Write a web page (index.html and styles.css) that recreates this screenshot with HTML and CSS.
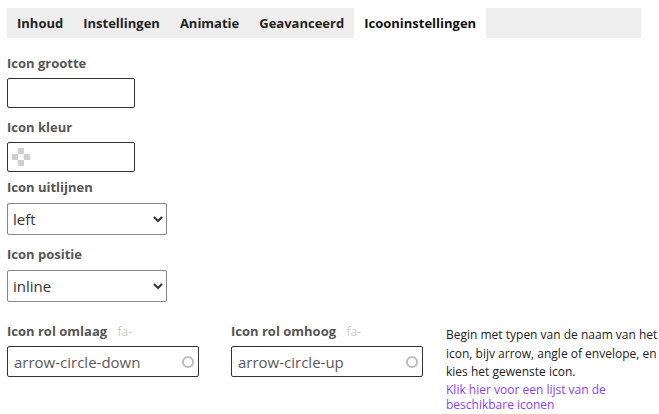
FILE: index.html
```html
<!DOCTYPE html>
<html lang="nl">
<head>
    <meta charset="UTF-8">
    <title>Icooninstellingen</title>
    <link rel="stylesheet" href="styles.css">
</head>
<body>
    <div class="tabs">
        <div class="tab">Inhoud</div>
        <div class="tab">Instellingen</div>
        <div class="tab">Animatie</div>
        <div class="tab">Geavanceerd</div>
        <div class="tab active">Icooninstellingen</div>
        <div class="tab-fill"></div>
    </div>

    <div class="panel">
        <div class="field">
            <label>Icon grootte</label>
            <input type="text" class="text-input">
        </div>
        <div class="field field-tight">
            <label>Icon kleur</label>
            <div class="color-input"><span class="checker"></span></div>
        </div>
        <div class="field">
            <label>Icon uitlijnen</label>
            <select class="select-input">
                <option>left</option>
                <option>center</option>
                <option>right</option>
            </select>
        </div>
        <div class="field">
            <label>Icon positie</label>
            <select class="select-input">
                <option>inline</option>
                <option>block</option>
            </select>
        </div>

        <div class="icon-row">
            <div class="field">
                <label>Icon rol omlaag <span class="prefix">fa-</span></label>
                <div class="icon-input">
                    <input type="text" value="arrow-circle-down">
                    <span class="ring"></span>
                </div>
            </div>
            <div class="field">
                <label>Icon rol omhoog <span class="prefix">fa-</span></label>
                <div class="icon-input">
                    <input type="text" value="arrow-circle-up">
                    <span class="ring"></span>
                </div>
            </div>
            <div class="help">
                <p>Begin met typen van de naam van het icon, bijv arrow, angle of envelope, en kies het gewenste icon.</p>
                <a href="#">Klik hier voor een lijst van de beschikbare iconen</a>
            </div>
        </div>
    </div>
</body>
</html>
```

FILE: styles.css
```css
body {
    margin: 0;
    padding: 8px 0 0 7px;
    font-family: "Open Sans", Arial, sans-serif;
    color: #222;
    background: #fff;
}

/* Tab bar */
.tabs {
    display: flex;
    width: 634px;
    height: 30px;
    background: #eeeeee;
}

.tab {
    padding: 0 10px;
    font-size: 13px;
    font-weight: bold;
    line-height: 30px;
    color: #222;
}

.tab.active {
    background: #fff;
    color: #111;
}

.tab-fill {
    flex: 1;
}

/* Form */
.panel {
    padding-top: 16px;
}

.field {
    display: flex;
    flex-direction: column;
    margin-bottom: 10px;
}

.field-tight {
    margin-bottom: 6px;
}

.field label {
    height: 18px;
    font-size: 13px;
    font-weight: bold;
    color: #555;
    line-height: 18px;
    margin-bottom: 6px;
}

.text-input,
.color-input {
    box-sizing: border-box;
    width: 128px;
    height: 30px;
    border: 1px solid #333;
    border-radius: 2px;
    margin: 0;
    padding: 0 6px;
}

.color-input {
    display: flex;
    align-items: center;
    padding: 0 4px;
}

.checker {
    width: 18px;
    height: 18px;
    background-color: #fff;
    background-image: conic-gradient(#cfcfcf 25%, #fff 25% 50%, #cfcfcf 50% 75%, #fff 75%);
    background-size: 12px 12px;
}

.select-input {
    box-sizing: border-box;
    width: 160px;
    height: 32px;
    margin: 1px 0 0;
    border: 1px solid #888;
    border-radius: 2px;
    font-family: "Open Sans", Arial, sans-serif;
    font-size: 15px;
    color: #333;
    background: #fff;
    padding-left: 1px;
}

/* Bottom row with icon fields */
.icon-row {
    display: grid;
    grid-template-columns: 192px 192px 214px;
    column-gap: 32px;
    margin-top: 20px;
}

.icon-row .field {
    margin-bottom: 0;
}

.prefix {
    font-weight: normal;
    color: #ccc;
    font-size: 12px;
    line-height: 18px;
    margin-left: 7px;
}

.icon-input {
    position: relative;
    width: 192px;
}

.icon-input input {
    box-sizing: border-box;
    width: 100%;
    height: 31px;
    margin: 0;
    border: 1px solid #333;
    border-radius: 2px;
    padding: 0 24px 0 6px;
    font-family: "Open Sans", Arial, sans-serif;
    font-size: 15px;
    color: #5a5a5a;
}

.ring {
    position: absolute;
    right: 5px;
    top: 10px;
    width: 8px;
    height: 8px;
    border: 2px solid #bbb;
    border-radius: 50%;
}

.help {
    margin-left: -9px;
    padding-top: 4px;
    font-size: 12px;
}

.help p {
    margin: 0;
    line-height: 18.5px;
    color: #222;
}

.help a {
    display: block;
    line-height: 15.5px;
    color: #8a3ffc;
    text-decoration: none;
}
```
